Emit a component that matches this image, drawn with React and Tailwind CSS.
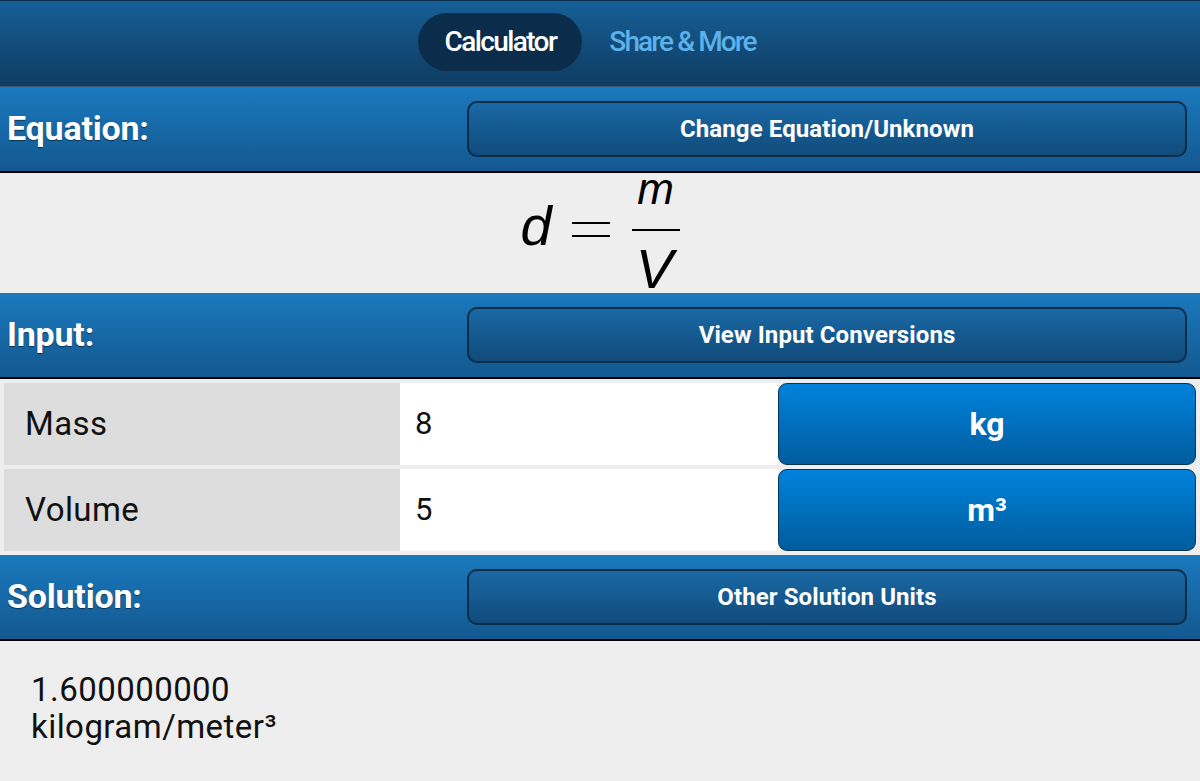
export default function App() {
    const rows = [
        { label: 'Mass', value: '8', unit: 'kg' },
        { label: 'Volume', value: '5', unit: 'm³' }
    ];

    const SectionHeader = ({ title, action }) => (
        <div className="h-[86px] flex items-center justify-between pl-[7px] pr-[13px] pb-[1px] bg-gradient-to-b from-[#1a79bd] to-[#135890] border-b-2 border-black">
            <span className="text-[34px] font-bold text-white tracking-[-0.2px] [text-shadow:0_1px_1px_rgba(0,0,0,0.5)]">{title}</span>
            <button className="w-[720px] h-[56px] rounded-[10px] border-2 border-[#0c2c48] bg-gradient-to-b from-[#1a69a5] to-[#114b7b] text-white text-[24px] font-bold tracking-[0.1px]">
                {action}
            </button>
        </div>
    );

    return (
        <div className="w-[1200px] h-[781px] flex flex-col bg-[#eeeeee] font-['Roboto',sans-serif] overflow-hidden">
            {/* Top tabs */}
            <div className="h-[87px] flex items-center justify-center gap-[27px] pb-[4px] pr-[26px] bg-gradient-to-b from-[#165f97] to-[#0e3c62] border-t border-[#0b2e4c] border-b border-b-[#3b5870]">
                <div className="w-[164px] h-[58px] rounded-full bg-[#0b2d4b] flex items-center justify-center">
                    <span className="text-[28px] font-medium text-white tracking-[-1.6px]">Calculator</span>
                </div>
                <span className="text-[28px] font-medium text-[#5cb1ea] tracking-[-1.9px]">Share &amp; More</span>
            </div>

            <SectionHeader title="Equation:" action="Change Equation/Unknown" />

            {/* Equation */}
            <div className="h-[120px] flex items-start justify-center font-['Liberation_Sans',sans-serif] italic text-black">
                <span className="w-[31px] text-[56px] leading-none mt-[25px]">d</span>
                <div className="flex flex-col gap-[11px] ml-[20px] mt-[49px]">
                    <div className="w-[38px] h-[2px] bg-black"></div>
                    <div className="w-[38px] h-[2px] bg-black"></div>
                </div>
                <div className="flex flex-col items-center w-[48px] ml-[22px]">
                    <span className="text-[44px] leading-[32px]">m</span>
                    <div className="w-[48px] h-[2px] bg-black mt-[24px]"></div>
                    <span className="text-[56px] leading-[50px] mt-[13px] pr-[2px]">V</span>
                </div>
            </div>

            <SectionHeader title="Input:" action="View Input Conversions" />

            {/* Input rows */}
            <div className="flex flex-col gap-[4px] p-[4px]">
                {rows.map((row) => (
                    <div key={row.label} className="h-[82px] flex">
                        <div className="w-[396px] bg-[#dddddd] flex items-center pl-[21px] text-[33px] text-[#111] tracking-[0.4px]">{row.label}</div>
                        <div className="w-[378px] bg-white flex items-center pl-[15px] text-[31px] text-[#111]">{row.value}</div>
                        <button className="flex-1 rounded-[9px] border border-[#063356] bg-gradient-to-b from-[#0082dc] to-[#005d9e] text-white text-[32px] font-bold">
                            {row.unit}
                        </button>
                    </div>
                ))}
            </div>

            <SectionHeader title="Solution:" action="Other Solution Units" />

            {/* Solution */}
            <div className="flex-1 pl-[31px] pt-[30px] text-[33px] leading-[37px] text-[#111] tracking-[0.45px]">
                <div>1.600000000</div>
                <div>kilogram/meter³</div>
            </div>
        </div>
    );
}
